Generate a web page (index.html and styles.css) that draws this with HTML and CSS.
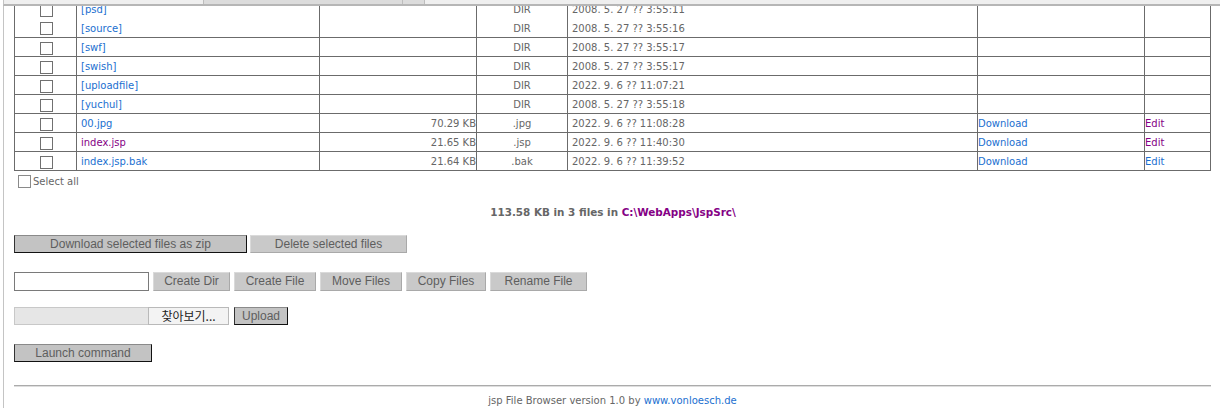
FILE: index.html
```html
<!DOCTYPE html>
<html lang="en">

<head>
    <meta charset="UTF-8">
    <title>jsp File Browser</title>
    <link rel="stylesheet" href="styles.css">
</head>

<body>
    <div class="tabs">
        <span class="tab-gap"></span>
        <span class="tab"></span>
        <span class="tab tab-small"></span>
    </div>
    <div class="frame">
        <table class="files">
            <colgroup>
                <col style="width: 62px">
                <col style="width: 243px">
                <col style="width: 157px">
                <col style="width: 91px">
                <col style="width: 410px">
                <col style="width: 167px">
                <col style="width: 66px">
            </colgroup>
            <tr class="cut">
                <td class="chk"><input type="checkbox"></td>
                <td class="name"><a href="#">[psd]</a></td>
                <td class="size"></td>
                <td class="type">DIR</td>
                <td class="date">2008. 5. 27 ?? 3:55:11</td>
                <td></td>
                <td></td>
            </tr>
            <tr>
                <td class="chk"><input type="checkbox"></td>
                <td class="name"><a href="#">[source]</a></td>
                <td class="size"></td>
                <td class="type">DIR</td>
                <td class="date">2008. 5. 27 ?? 3:55:16</td>
                <td></td>
                <td></td>
            </tr>
            <tr>
                <td class="chk"><input type="checkbox"></td>
                <td class="name"><a href="#">[swf]</a></td>
                <td class="size"></td>
                <td class="type">DIR</td>
                <td class="date">2008. 5. 27 ?? 3:55:17</td>
                <td></td>
                <td></td>
            </tr>
            <tr>
                <td class="chk"><input type="checkbox"></td>
                <td class="name"><a href="#">[swish]</a></td>
                <td class="size"></td>
                <td class="type">DIR</td>
                <td class="date">2008. 5. 27 ?? 3:55:17</td>
                <td></td>
                <td></td>
            </tr>
            <tr>
                <td class="chk"><input type="checkbox"></td>
                <td class="name"><a href="#">[uploadfile]</a></td>
                <td class="size"></td>
                <td class="type">DIR</td>
                <td class="date">2022. 9. 6 ?? 11:07:21</td>
                <td></td>
                <td></td>
            </tr>
            <tr>
                <td class="chk"><input type="checkbox"></td>
                <td class="name"><a href="#">[yuchul]</a></td>
                <td class="size"></td>
                <td class="type">DIR</td>
                <td class="date">2008. 5. 27 ?? 3:55:18</td>
                <td></td>
                <td></td>
            </tr>
            <tr>
                <td class="chk"><input type="checkbox"></td>
                <td class="name"><a href="#">00.jpg</a></td>
                <td class="size">70.29 KB</td>
                <td class="type">.jpg</td>
                <td class="date">2022. 9. 6 ?? 11:08:28</td>
                <td><a href="#">Download</a></td>
                <td><a class="visited" href="#">Edit</a></td>
            </tr>
            <tr>
                <td class="chk"><input type="checkbox"></td>
                <td class="name"><a class="visited" href="#">index.jsp</a></td>
                <td class="size">21.65 KB</td>
                <td class="type">.jsp</td>
                <td class="date">2022. 9. 6 ?? 11:40:30</td>
                <td><a href="#">Download</a></td>
                <td><a class="visited" href="#">Edit</a></td>
            </tr>
            <tr>
                <td class="chk"><input type="checkbox"></td>
                <td class="name"><a href="#">index.jsp.bak</a></td>
                <td class="size">21.64 KB</td>
                <td class="type">.bak</td>
                <td class="date">2022. 9. 6 ?? 11:39:52</td>
                <td><a href="#">Download</a></td>
                <td><a href="#">Edit</a></td>
            </tr>
        </table>

        <label class="select-all"><input type="checkbox"> Select all</label>

        <p class="summary">113.58 KB in 3 files in <a class="visited" href="#">C:\WebApps\JspSrc\</a></p>

        <div class="row row-zip">
            <button class="btn default wide">Download selected files as zip</button>
            <button class="btn delete">Delete selected files</button>
        </div>

        <div class="row row-files">
            <input class="field" type="text">
            <button class="btn w-dir">Create Dir</button>
            <button class="btn w-file">Create File</button>
            <button class="btn w-move">Move Files</button>
            <button class="btn w-copy">Copy Files</button>
            <button class="btn w-rename">Rename File</button>
        </div>

        <div class="row row-upload">
            <div class="upload">
                <span class="upload-path"></span>
                <span class="upload-browse">찾아보기...</span>
            </div>
            <button class="btn default upload-btn">Upload</button>
        </div>

        <div class="row row-launch">
            <button class="btn default launch">Launch command</button>
        </div>

        <hr class="rule">
        <p class="footer">jsp File Browser version 1.0 by <a href="#">www.vonloesch.de</a></p>
    </div>
</body>

</html>
```

FILE: styles.css
```css
* {
    box-sizing: border-box;
}

body {
    margin: 0;
    height: 408px;
    overflow: hidden;
    background: #fff;
    font-family: "DejaVu Sans", Verdana, sans-serif;
    font-size: 10px;
    color: #666;
}

a {
    color: #1b6fd0;
    text-decoration: none;
}

a.visited {
    color: #850085;
}

/* strip of the window above the frame */
.tabs {
    display: flex;
    height: 6px;
    margin-left: 3px;
    background: #efefef;
    border-left: 1px solid #c4c4c4;
    border-bottom: 2px solid #b6b6b6;
}

.tab-gap {
    width: 199px;
}

.tab {
    width: 200px;
    background: #dcdcdc;
    border-left: 1px solid #bdbdbd;
    border-right: 1px solid #bdbdbd;
}

.tab-small {
    width: 22px;
    border-left: none;
}

.frame {
    margin-left: 3px;
    padding-left: 10px;
    border-left: 1px solid #c4c4c4;
    height: 402px;
    overflow: hidden;
}

/* file table */
.files {
    width: 1197px;
    table-layout: fixed;
    border-collapse: collapse;
    margin-top: -7px;
}

.files td {
    height: 19px;
    padding: 3px 0 0;
    border: 1px solid #6b6b6b;
    white-space: nowrap;
    overflow: hidden;
    vertical-align: middle;
    line-height: 12px;
}

.files tr.cut td {
    border-bottom-style: hidden;
    border-top-style: hidden;
}

.files td.chk {
    text-align: center;
    padding-left: 1px;
}

.files td.name {
    padding-left: 4px;
}

.files td.size {
    text-align: right;
}

.files td.type {
    text-align: center;
}

.files td.date {
    padding-left: 4px;
}

input[type="checkbox"] {
    appearance: none;
    -webkit-appearance: none;
    width: 13px;
    height: 13px;
    margin: 0;
    border: 1px solid #707070;
    background: #fff;
    vertical-align: middle;
}

.select-all {
    display: flex;
    align-items: center;
    gap: 2px;
    margin: 4px 0 0 4px;
    height: 14px;
}

.select-all input[type="checkbox"] {
    border-color: #8a8a8a;
}

.summary {
    margin: 16px 0 0;
    padding-right: 8px;
    text-align: center;
    font-weight: bold;
    font-size: 10.4px;
    line-height: 14px;
}

/* action rows */
.row {
    display: flex;
    align-items: center;
    gap: 4px;
    height: 18px;
}

.row-zip {
    gap: 3px;
    margin-top: 16px;
}

.row-files {
    height: 19px;
    margin-top: 19px;
}

.row-upload {
    margin-top: 16px;
}

.row-launch {
    margin-top: 19px;
}

.btn {
    height: 18px;
    padding: 0;
    font-family: "Liberation Sans", Arial, sans-serif;
    font-size: 12px;
    line-height: 16px;
    color: #5e5e5e;
    background: #c9c9c9;
    border: 1px solid;
    border-color: #dadada #a9a9a9 #a9a9a9 #dadada;
}

.row-files .btn {
    height: 19px;
}

.btn.default {
    background: #c3c3c3;
    border-color: #8a8a8a #111 #111 #333;
}

.wide {
    width: 233px;
}

.delete {
    width: 157px;
}

.field {
    width: 135px;
    height: 19px;
    margin: 0;
    border: 1px solid #7a7a7a;
    background: #fff;
}

.w-dir {
    width: 77px;
}

.w-file {
    width: 82px;
}

.w-move {
    width: 82px;
}

.w-copy {
    width: 80px;
}

.w-rename {
    width: 97px;
}

.upload {
    display: flex;
    height: 18px;
}

.upload-path {
    width: 134px;
    background: #e6e6e6;
    border: 1px solid #c8c8c8;
    border-right: none;
}

.upload-browse {
    width: 81px;
    background: #f3f3f3;
    border: 1px solid #b9b9b9;
    color: #222;
    font-family: "Noto Sans CJK KR", sans-serif;
    font-size: 12px;
    line-height: 16px;
    text-align: center;
}

.upload-btn {
    width: 54px;
    margin-left: 1px;
}

.launch {
    width: 138px;
}

.rule {
    margin: 23px 0 0;
    width: 1197px;
    height: 0;
    border: none;
    border-top: 1px solid #ababab;
    border-bottom: 1px solid #dedede;
}

.footer {
    margin: 7px 0 0;
    width: 1197px;
    text-align: center;
    line-height: 14px;
}
```
